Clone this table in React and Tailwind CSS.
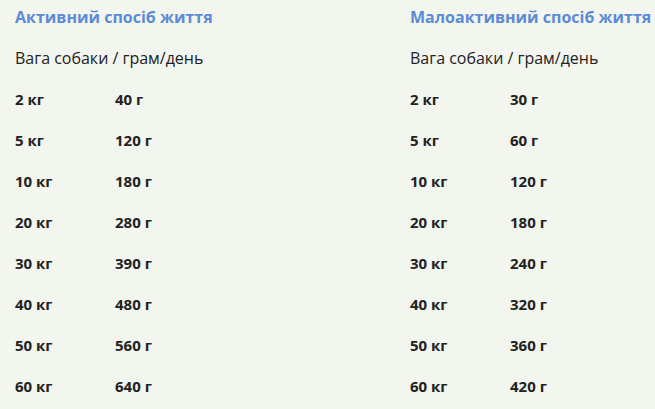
const active = [
  ['2 кг', '40 г'],
  ['5 кг', '120 г'],
  ['10 кг', '180 г'],
  ['20 кг', '280 г'],
  ['30 кг', '390 г'],
  ['40 кг', '480 г'],
  ['50 кг', '560 г'],
  ['60 кг', '640 г'],
];

const lazy = [
  ['2 кг', '30 г'],
  ['5 кг', '60 г'],
  ['10 кг', '120 г'],
  ['20 кг', '180 г'],
  ['30 кг', '240 г'],
  ['40 кг', '320 г'],
  ['50 кг', '360 г'],
  ['60 кг', '420 г'],
];

function Table({ title, rows }) {
  return (
    <div className="w-[395px] shrink-0 pl-[15px]">
      <h3 className="text-[16px] leading-[34px] font-bold text-[#5b8bd5]">{title}</h3>
      <p className="mt-[7px] text-[16px] leading-[34px] text-[#222]">Вага собаки / грам/день</p>
      <div className="mt-[4px]">
        {rows.map(([w, g]) => (
          <div key={w} className="flex h-[41px] items-center text-[15px] font-bold text-[#222]">
            <span className="w-[100px]">{w}</span>
            <span>{g}</span>
          </div>
        ))}
      </div>
    </div>
  );
}

export default function App() {
  return (
    <div className="h-[409px] w-[655px] overflow-hidden bg-[#f3f5ef] font-['Open_Sans',sans-serif]">
      <div className="flex">
        <Table title="Активний спосіб життя" rows={active} />
        <Table title="Малоактивний спосіб життя" rows={lazy} />
      </div>
    </div>
  );
}
